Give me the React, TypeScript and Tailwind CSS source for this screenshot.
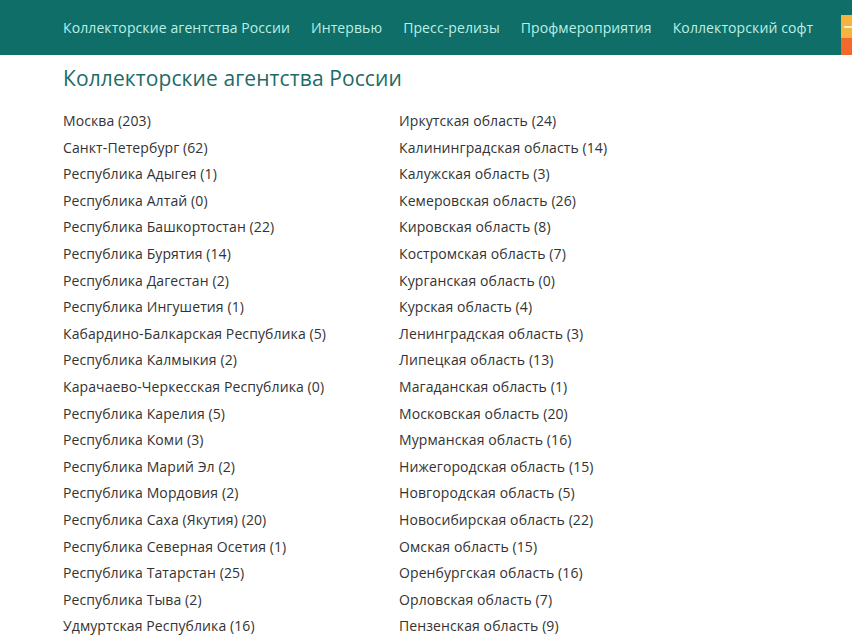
const navItems = [
  "Коллекторские агентства России",
  "Интервью",
  "Пресс-релизы",
  "Профмероприятия",
  "Коллекторский софт",
];

const leftRegions = [
  "Москва (203)",
  "Санкт-Петербург (62)",
  "Республика Адыгея (1)",
  "Республика Алтай (0)",
  "Республика Башкортостан (22)",
  "Республика Бурятия (14)",
  "Республика Дагестан (2)",
  "Республика Ингушетия (1)",
  "Кабардино-Балкарская Республика (5)",
  "Республика Калмыкия (2)",
  "Карачаево-Черкесская Республика (0)",
  "Республика Карелия (5)",
  "Республика Коми (3)",
  "Республика Марий Эл (2)",
  "Республика Мордовия (2)",
  "Республика Саха (Якутия) (20)",
  "Республика Северная Осетия (1)",
  "Республика Татарстан (25)",
  "Республика Тыва (2)",
  "Удмуртская Республика (16)",
];

const rightRegions = [
  "Иркутская область (24)",
  "Калининградская область (14)",
  "Калужская область (3)",
  "Кемеровская область (26)",
  "Кировская область (8)",
  "Костромская область (7)",
  "Курганская область (0)",
  "Курская область (4)",
  "Ленинградская область (3)",
  "Липецкая область (13)",
  "Магаданская область (1)",
  "Московская область (20)",
  "Мурманская область (16)",
  "Нижегородская область (15)",
  "Новгородская область (5)",
  "Новосибирская область (22)",
  "Омская область (15)",
  "Оренбургская область (16)",
  "Орловская область (7)",
  "Пензенская область (9)",
];

function RegionColumn({ items }: { items: string[] }) {
  return (
    <ul className="flex flex-col">
      {items.map((name) => (
        <li key={name} className="text-[14px] leading-[26.6px] tracking-[0.1px] text-[#333333] whitespace-nowrap">
          <a href="#">{name}</a>
        </li>
      ))}
    </ul>
  );
}

export default function App() {
  return (
    <div className="w-[852px] h-[639px] overflow-hidden bg-white" style={{ fontFamily: '"Open Sans", sans-serif' }}>
      {/* Top navigation */}
      <nav className="h-[55px] bg-[#0f6e68] flex items-center pl-[63px] relative">
        <ul className="flex gap-[21px]">
          {navItems.map((item) => (
            <li key={item} className="text-[14px] tracking-[0.1px] text-[#bdeee6] whitespace-nowrap">
              {item}
            </li>
          ))}
        </ul>
        <div className="absolute right-0 top-[15px] w-[11px] h-[40px] flex flex-col">
          <div className="h-[23px] bg-[#f4b43e] flex items-center">
            <div className="ml-[3px] w-[8px] h-[2px] bg-white/80" />
          </div>
          <div className="flex-1 bg-[#f2692b]" />
        </div>
      </nav>

      <main className="pl-[63px]">
        <h1 className="text-[21px] leading-[30px] tracking-[0.1px] text-[#1d6b66] mt-[8px] mb-[15px]">
          Коллекторские агентства России
        </h1>
        <div className="grid grid-cols-[336px_1fr]">
          <RegionColumn items={leftRegions} />
          <RegionColumn items={rightRegions} />
        </div>
      </main>
    </div>
  );
}
